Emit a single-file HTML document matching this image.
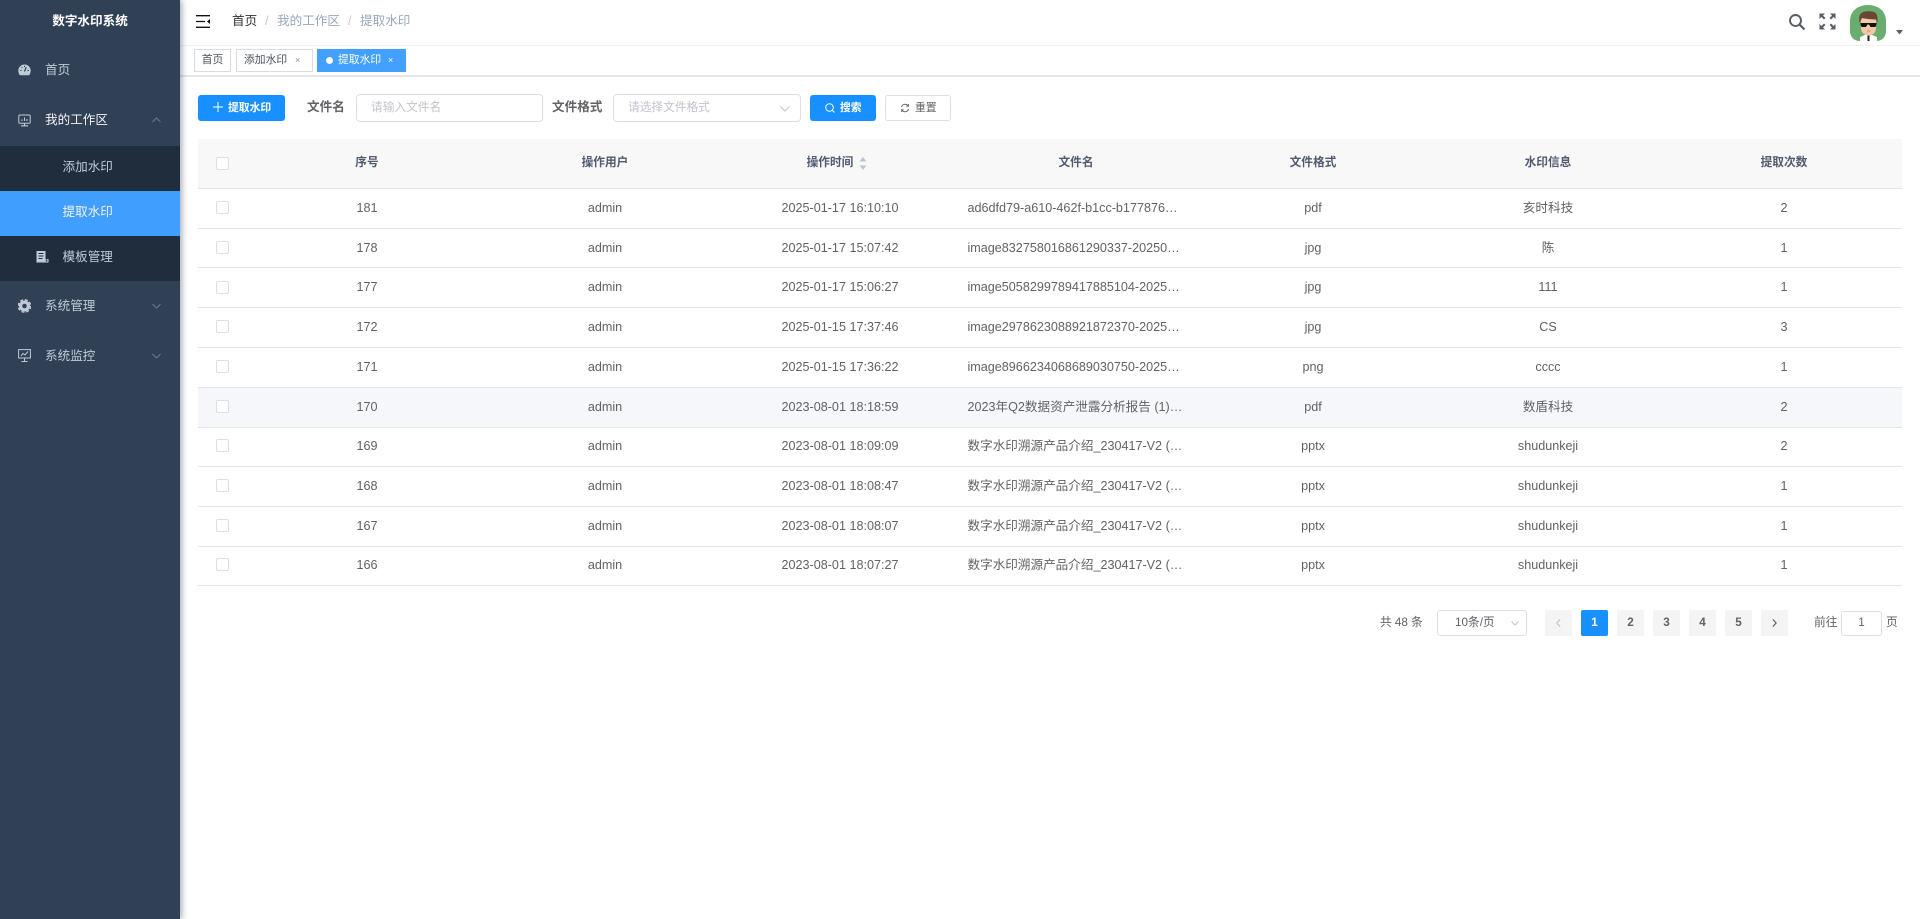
<!DOCTYPE html>
<html lang="zh-CN"><head><meta charset="utf-8"><title>数字水印系统</title>
<style>
*{box-sizing:border-box}
html,body{margin:0;padding:0;width:1920px;height:919px;overflow:hidden;background:#fff;font-family:"Liberation Sans","Noto Sans CJK SC",sans-serif;font-size:12.6px;color:#606266}
body{filter:blur(.3px)}
.a{position:absolute;white-space:nowrap;line-height:1}
.c{transform:translateX(-50%)}
#side{position:absolute;left:0;top:0;width:180px;height:919px;background:#304156;box-shadow:2px 0 6px rgba(0,21,41,.35);z-index:5}
.m{color:#bfcbd9}
.line{position:absolute;left:198px;width:1704px;height:1px;background:#dfe6ec}
.cb{position:absolute;left:216px;width:13px;height:13px;border:1px solid #dcdfe6;border-radius:2px;background:#fff}
.th{font-weight:bold;color:#515a6e;font-size:11.7px}
.pg{position:absolute;top:610px;width:27px;height:26px;background:#f4f4f5;border-radius:2px;text-align:center;line-height:26px;font-weight:bold;color:#606266;font-size:11.7px}
.box{position:absolute;border:1px solid #dcdfe6;border-radius:4px;background:#fff}
.tag{position:absolute;top:49px;height:23px;border:1px solid #d8dce5;background:#fff;font-size:10.8px;line-height:21px;color:#495060}
svg{position:absolute;display:block}
</style></head><body>
<div id="side">
<div class="a c" style="left:90px;top:15px;color:#fff;font-weight:bold;font-size:12.6px">数字水印系统</div>
<div style="position:absolute;left:0;top:146px;width:180px;height:135px;background:#1f2d3d"></div>
<div style="position:absolute;left:0;top:191px;width:180px;height:45px;background:#409eff"></div>
<svg style="left:18px;top:64px" width="13" height="12" viewBox="0 0 13 12"><path d="M6.5 .5A6.200 6.200 0 0 0 .3 6.500c0 2 .7 3.600 1.500 4.700h9.400c.8-1.100 1.500-2.700 1.500-4.700A6.200 6.200 0 0 0 6.500.5z" fill="#bfcbd9"/><path d="M6.500 7.500L8.200 3.200" stroke="#304156" stroke-width="1.200" fill="none"/><path d="M2.200 6.500h1.300M9.500 6.500h1.300M3.600 3.300l.8.8M6.500 1.800v1.200" stroke="#304156" stroke-width="1" fill="none"/></svg>
<div class="a m" style="left:45px;top:64px">首页</div>
<svg style="left:18px;top:114px" width="13" height="13" viewBox="0 0 13 13" fill="none" stroke="#bfcbd9"><rect x=".8" y="1" width="11.400" height="8.200" rx="1"/><path d="M3 11.800h7M6.500 9.500v2M4 7V5.500M6.500 7V3.500M9 7V5" stroke-width="1.100"/></svg>
<div class="a" style="left:45px;top:114px;color:#f4f4f5">我的工作区</div>
<svg style="left:152px;top:117px" width="9" height="6" viewBox="0 0 9 6" fill="none" stroke="#6b7a8c"><path d="M.5 5L4.500 1L8.500 5"/></svg>
<div class="a m" style="left:62.500px;top:161px">添加水印</div>
<div class="a" style="left:62.500px;top:206px;color:#f4f4f5">提取水印</div>
<svg style="left:36px;top:251px" width="13" height="12" viewBox="0 0 13 12"><path d="M.5 0h9v8h3v3.500H.5z" fill="#bfcbd9"/><path d="M2.500 2.500h5M2.500 5h5M2.500 7.500h4" stroke="#1f2d3d" stroke-width="1"/><path d="M9.800 8.500h1.500v2H9.800z" fill="#1f2d3d"/></svg>
<div class="a m" style="left:62.500px;top:251px">模板管理</div>
<svg style="left:18px;top:299px" width="13" height="14" viewBox="0 0 13 14"><circle cx="6.500" cy="7" r="5.500" fill="#bfcbd9"/><circle cx="6.500" cy="7" r="6.200" fill="none" stroke="#bfcbd9" stroke-width="1.400" stroke-dasharray="3 1.900"/><circle cx="6.500" cy="7" r="2.300" fill="#304156"/></svg>
<div class="a m" style="left:45px;top:300px">系统管理</div>
<svg style="left:152px;top:303px" width="9" height="6" viewBox="0 0 9 6" fill="none" stroke="#6b7a8c"><path d="M.5 1L4.500 5L8.500 1"/></svg>
<svg style="left:18px;top:349px" width="13" height="13" viewBox="0 0 13 13" fill="none" stroke="#bfcbd9"><rect x=".6" y=".6" width="11.800" height="8.400"/><path d="M3 7l2-2.500 2 1.500 3-3.500M6.500 9v3M3.500 12.500h6"/></svg>
<div class="a m" style="left:45px;top:350px">系统监控</div>
<svg style="left:152px;top:353px" width="9" height="6" viewBox="0 0 9 6" fill="none" stroke="#6b7a8c"><path d="M.5 1L4.500 5L8.500 1"/></svg>
</div>

<svg style="left:196px;top:15px" width="15" height="13" viewBox="0 0 15 13"><path d="M0 .7h14M0 6.500h9M0 12.300h14" stroke="#111" stroke-width="1.300"/><path d="M14 4v5l-3-2.500z" fill="#111"/></svg>
<div class="a" style="left:232px;top:15px;color:#303133">首页</div>
<div class="a" style="left:265px;top:15px;color:#c0c4cc">/</div>
<div class="a" style="left:277px;top:15px;color:#97a8be">我的工作区</div>
<div class="a" style="left:348px;top:15px;color:#c0c4cc">/</div>
<div class="a" style="left:360px;top:15px;color:#97a8be">提取水印</div>

<svg style="left:1788px;top:13px" width="18" height="18" viewBox="0 0 18 18" fill="none" stroke="#5a5e66" stroke-width="1.900"><circle cx="7.500" cy="7.500" r="5.500"/><path d="M11.500 11.500L16.500 16.500" stroke-width="2.200"/></svg>
<svg style="left:1819px;top:13px" width="17" height="17" viewBox="0 0 17 17" fill="#5a5e66"><path d="M.5.500h5.500L4 2.500l2.500 2.500-1.500 1.500L2.500 4 .5 6zM16.500.500H11l2 2-2.500 2.500 1.500 1.500L14.500 4l2 2zM.5 16.500H6l-2-2 2.500-2.500L5 10.500 2.500 13l-2-2zM16.500 16.500H11l2-2-2.500-2.500 1.500-1.500 2.500 2.500 2-2z"/></svg>
<svg style="left:1850px;top:5px" width="36" height="36" viewBox="0 0 36 36"><defs><clipPath id="av"><path d="M0 16C0 6 8 0 18 0s18 6 18 16v10c0 6-4 10-10 10H10C4 36 0 32 0 26z"/></clipPath></defs><g clip-path="url(#av)"><rect width="36" height="36" fill="#6aae6f"/><path d="M10 36v-4l5-2h7l5 2v4z" fill="#fff"/><rect x="17.500" y="29" width="2" height="7" fill="#222"/><path d="M11 12h15v11c0 4-3 7.500-7.500 7.500S11 27 11 23z" fill="#f3c9a8"/><path d="M9.500 18C8.500 11 10 8.500 12 8c1-2 10-2.500 13-.5 2 1 3 5 2.500 10.500l-1.500-3.500c-4 0-10-.5-14-1.500z" fill="#6b4632"/><path d="M10.500 18h16v1.200l-1 2.800h-5l-1.500-2.500h-1.500L16 22h-4.500l-1-2.800z" fill="#111"/><path d="M17 26h3.500" stroke="#c98a6e" stroke-width="1"/></g></svg>
<svg style="left:1895.500px;top:30px" width="7" height="5" viewBox="0 0 7 5"><path d="M0 0h7L3.500 4.500z" fill="#5a5e66"/></svg>

<div style="position:absolute;left:180px;top:45px;width:1740px;height:1px;background:#f0f1f3"></div>
<div style="position:absolute;left:180px;top:75px;width:1740px;height:2px;background:#e4e6ea"></div>
<div class="tag" style="left:194px;width:37px;text-align:center">首页</div>
<div class="tag" style="left:236px;width:77px;padding-left:7px">添加水印<span style="position:absolute;left:58px;top:0;font-size:9px;color:#8a8f99">×</span></div>
<div class="tag" style="left:317px;width:89px;background:#42a0ff;border-color:#42a0ff;color:#fff;padding-left:20px"><span style="position:absolute;left:8px;top:7px;width:7px;height:7px;border-radius:50%;background:#fff"></span>提取水印<span style="position:absolute;left:70px;top:0;font-size:9px">×</span></div>

<div style="position:absolute;left:198px;top:95px;width:87px;height:26px;background:#1890ff;border-radius:3px"></div>
<svg style="left:213px;top:102px" width="10" height="10" viewBox="0 0 10 10"><path d="M5 0v10M0 5h10" stroke="#fff" stroke-width="1"/></svg>
<div class="a" style="left:228px;top:102.500px;color:#fff;font-size:10.800px;font-weight:bold">提取水印</div>
<div class="a" style="left:307px;top:101px;font-weight:bold;color:#606266">文件名</div>
<div class="box" style="left:356px;top:94px;width:187px;height:28px"></div>
<div class="a" style="left:371px;top:102px;color:#c0c4cc;font-size:11.700px">请输入文件名</div>
<div class="a" style="left:552px;top:101px;font-weight:bold;color:#606266">文件格式</div>
<div class="box" style="left:613px;top:94px;width:188px;height:28px"></div>
<div class="a" style="left:628px;top:102px;color:#c0c4cc;font-size:11.700px">请选择文件格式</div>
<svg style="left:780px;top:106px" width="10" height="6" viewBox="0 0 10 6" fill="none" stroke="#c0c4cc"><path d="M.5.500L5 5l4.500-4.500"/></svg>
<div style="position:absolute;left:810px;top:95px;width:66px;height:26px;background:#1890ff;border-radius:3px"></div>
<svg style="left:825px;top:103px" width="10" height="10" viewBox="0 0 10 10" fill="none" stroke="#fff"><circle cx="4.500" cy="4.500" r="3.800"/><path d="M7.300 7.300L9.500 9.500"/></svg>
<div class="a" style="left:840px;top:102.500px;color:#fff;font-size:10.800px;font-weight:bold">搜索</div>
<div class="box" style="left:885px;top:95px;width:66px;height:26px;border-radius:3px"></div>
<svg style="left:900px;top:103px" width="10" height="10" viewBox="0 0 10 10" fill="none" stroke="#606266"><path d="M1.500 4A3.700 3.700 0 0 1 8.200 3M8.500 6A3.700 3.700 0 0 1 1.800 7"/><path d="M8.500 1v2.200H6.300M1.500 9V6.800h2.200" stroke-width=".8"/></svg>
<div class="a" style="left:915px;top:102.500px;font-size:10.800px;color:#606266">重置</div>

<div style="position:absolute;left:198px;top:139px;width:1704px;height:49px;background:#f8f8f9"></div>
<div style="position:absolute;left:198px;top:387px;width:1704px;height:40px;background:#f5f7fa"></div>
<div class="line" style="top:188px"></div>
<div class="line" style="top:228px"></div>
<div class="line" style="top:267px"></div>
<div class="line" style="top:307px"></div>
<div class="line" style="top:347px"></div>
<div class="line" style="top:387px"></div>
<div class="line" style="top:427px"></div>
<div class="line" style="top:466px"></div>
<div class="line" style="top:506px"></div>
<div class="line" style="top:546px"></div>
<div class="line" style="top:585px"></div>

<div class="cb" style="top:157px"></div>
<div class="a c th" style="left:367px;top:157px">序号</div>
<div class="a c th" style="left:605px;top:157px">操作用户</div>
<div class="a c th" style="left:830px;top:157px">操作时间</div>
<svg style="left:859px;top:157px" width="8" height="13" viewBox="0 0 8 13" fill="#c0c4cc"><path d="M4 0l3.500 4.500h-7zM4 13L.5 8.500h7z"/></svg>
<div class="a c th" style="left:1076px;top:157px">文件名</div>
<div class="a c th" style="left:1313px;top:157px">文件格式</div>
<div class="a c th" style="left:1548px;top:157px">水印信息</div>
<div class="a c th" style="left:1784px;top:157px">提取次数</div>

<div class="cb" style="top:201px"></div><div class="a c" style="left:367px;top:202px">181</div><div class="a c" style="left:605px;top:202px">admin</div><div class="a c" style="left:840px;top:202px">2025-01-17 16:10:10</div><div class="a" style="left:967.500px;top:202px">ad6dfd79-a610-462f-b1cc-b177876…</div><div class="a c" style="left:1313px;top:202px">pdf</div><div class="a c" style="left:1548px;top:202px">亥时科技</div><div class="a c" style="left:1784px;top:202px">2</div>
<div class="cb" style="top:241px"></div><div class="a c" style="left:367px;top:242px">178</div><div class="a c" style="left:605px;top:242px">admin</div><div class="a c" style="left:840px;top:242px">2025-01-17 15:07:42</div><div class="a" style="left:967.500px;top:242px">image832758016861290337-20250…</div><div class="a c" style="left:1313px;top:242px">jpg</div><div class="a c" style="left:1548px;top:242px">陈</div><div class="a c" style="left:1784px;top:242px">1</div>
<div class="cb" style="top:281px"></div><div class="a c" style="left:367px;top:281px">177</div><div class="a c" style="left:605px;top:281px">admin</div><div class="a c" style="left:840px;top:281px">2025-01-17 15:06:27</div><div class="a" style="left:967.500px;top:281px">image5058299789417885104-2025…</div><div class="a c" style="left:1313px;top:281px">jpg</div><div class="a c" style="left:1548px;top:281px">111</div><div class="a c" style="left:1784px;top:281px">1</div>
<div class="cb" style="top:320px"></div><div class="a c" style="left:367px;top:321px">172</div><div class="a c" style="left:605px;top:321px">admin</div><div class="a c" style="left:840px;top:321px">2025-01-15 17:37:46</div><div class="a" style="left:967.500px;top:321px">image2978623088921872370-2025…</div><div class="a c" style="left:1313px;top:321px">jpg</div><div class="a c" style="left:1548px;top:321px">CS</div><div class="a c" style="left:1784px;top:321px">3</div>
<div class="cb" style="top:360px"></div><div class="a c" style="left:367px;top:361px">171</div><div class="a c" style="left:605px;top:361px">admin</div><div class="a c" style="left:840px;top:361px">2025-01-15 17:36:22</div><div class="a" style="left:967.500px;top:361px">image8966234068689030750-2025…</div><div class="a c" style="left:1313px;top:361px">png</div><div class="a c" style="left:1548px;top:361px">cccc</div><div class="a c" style="left:1784px;top:361px">1</div>
<div class="cb" style="top:400px"></div><div class="a c" style="left:367px;top:401px">170</div><div class="a c" style="left:605px;top:401px">admin</div><div class="a c" style="left:840px;top:401px">2023-08-01 18:18:59</div><div class="a" style="left:967.500px;top:401px">2023年Q2数据资产泄露分析报告 (1)…</div><div class="a c" style="left:1313px;top:401px">pdf</div><div class="a c" style="left:1548px;top:401px">数盾科技</div><div class="a c" style="left:1784px;top:401px">2</div>
<div class="cb" style="top:439px"></div><div class="a c" style="left:367px;top:440px">169</div><div class="a c" style="left:605px;top:440px">admin</div><div class="a c" style="left:840px;top:440px">2023-08-01 18:09:09</div><div class="a" style="left:967.500px;top:440px">数字水印溯源产品介绍_230417-V2 (…</div><div class="a c" style="left:1313px;top:440px">pptx</div><div class="a c" style="left:1548px;top:440px">shudunkeji</div><div class="a c" style="left:1784px;top:440px">2</div>
<div class="cb" style="top:479px"></div><div class="a c" style="left:367px;top:480px">168</div><div class="a c" style="left:605px;top:480px">admin</div><div class="a c" style="left:840px;top:480px">2023-08-01 18:08:47</div><div class="a" style="left:967.500px;top:480px">数字水印溯源产品介绍_230417-V2 (…</div><div class="a c" style="left:1313px;top:480px">pptx</div><div class="a c" style="left:1548px;top:480px">shudunkeji</div><div class="a c" style="left:1784px;top:480px">1</div>
<div class="cb" style="top:519px"></div><div class="a c" style="left:367px;top:520px">167</div><div class="a c" style="left:605px;top:520px">admin</div><div class="a c" style="left:840px;top:520px">2023-08-01 18:08:07</div><div class="a" style="left:967.500px;top:520px">数字水印溯源产品介绍_230417-V2 (…</div><div class="a c" style="left:1313px;top:520px">pptx</div><div class="a c" style="left:1548px;top:520px">shudunkeji</div><div class="a c" style="left:1784px;top:520px">1</div>
<div class="cb" style="top:558px"></div><div class="a c" style="left:367px;top:559px">166</div><div class="a c" style="left:605px;top:559px">admin</div><div class="a c" style="left:840px;top:559px">2023-08-01 18:07:27</div><div class="a" style="left:967.500px;top:559px">数字水印溯源产品介绍_230417-V2 (…</div><div class="a c" style="left:1313px;top:559px">pptx</div><div class="a c" style="left:1548px;top:559px">shudunkeji</div><div class="a c" style="left:1784px;top:559px">1</div>

<div class="a" style="left:1380px;top:617px;font-size:11.700px">共 48 条</div>
<div class="box" style="left:1437px;top:610px;width:90px;height:26px;border-radius:3px"></div>
<div class="a" style="left:1455px;top:617px;font-size:11.700px">10条/页</div>
<svg style="left:1511px;top:621px" width="8" height="5" viewBox="0 0 8 5" fill="none" stroke="#c0c4cc"><path d="M.5.500L4 4l3.500-3.500"/></svg>
<div class="pg" style="left:1545px"><svg style="left:10.500px;top:9px" width="5" height="8" viewBox="0 0 6 10" fill="none" stroke="#c0c4cc" stroke-width="1.500"><path d="M5 .5L1 5l4 4.500"/></svg></div>
<div class="pg" style="left:1581px;background:#1890ff;color:#fff">1</div>
<div class="pg" style="left:1617px">2</div>
<div class="pg" style="left:1653px">3</div>
<div class="pg" style="left:1689px">4</div>
<div class="pg" style="left:1725px">5</div>
<div class="pg" style="left:1761px"><svg style="left:11px;top:9px" width="5" height="8" viewBox="0 0 6 10" fill="none" stroke="#606266" stroke-width="1.500"><path d="M1 .5L5 5l-4 4.500"/></svg></div>
<div class="a" style="left:1814px;top:617px;font-size:11.700px">前往</div>
<div class="box" style="left:1841px;top:611px;width:41px;height:25px;border-radius:3px;text-align:center;line-height:22px;font-size:11.700px">1</div>
<div class="a" style="left:1886px;top:617px;font-size:11.700px">页</div>
</body></html>
